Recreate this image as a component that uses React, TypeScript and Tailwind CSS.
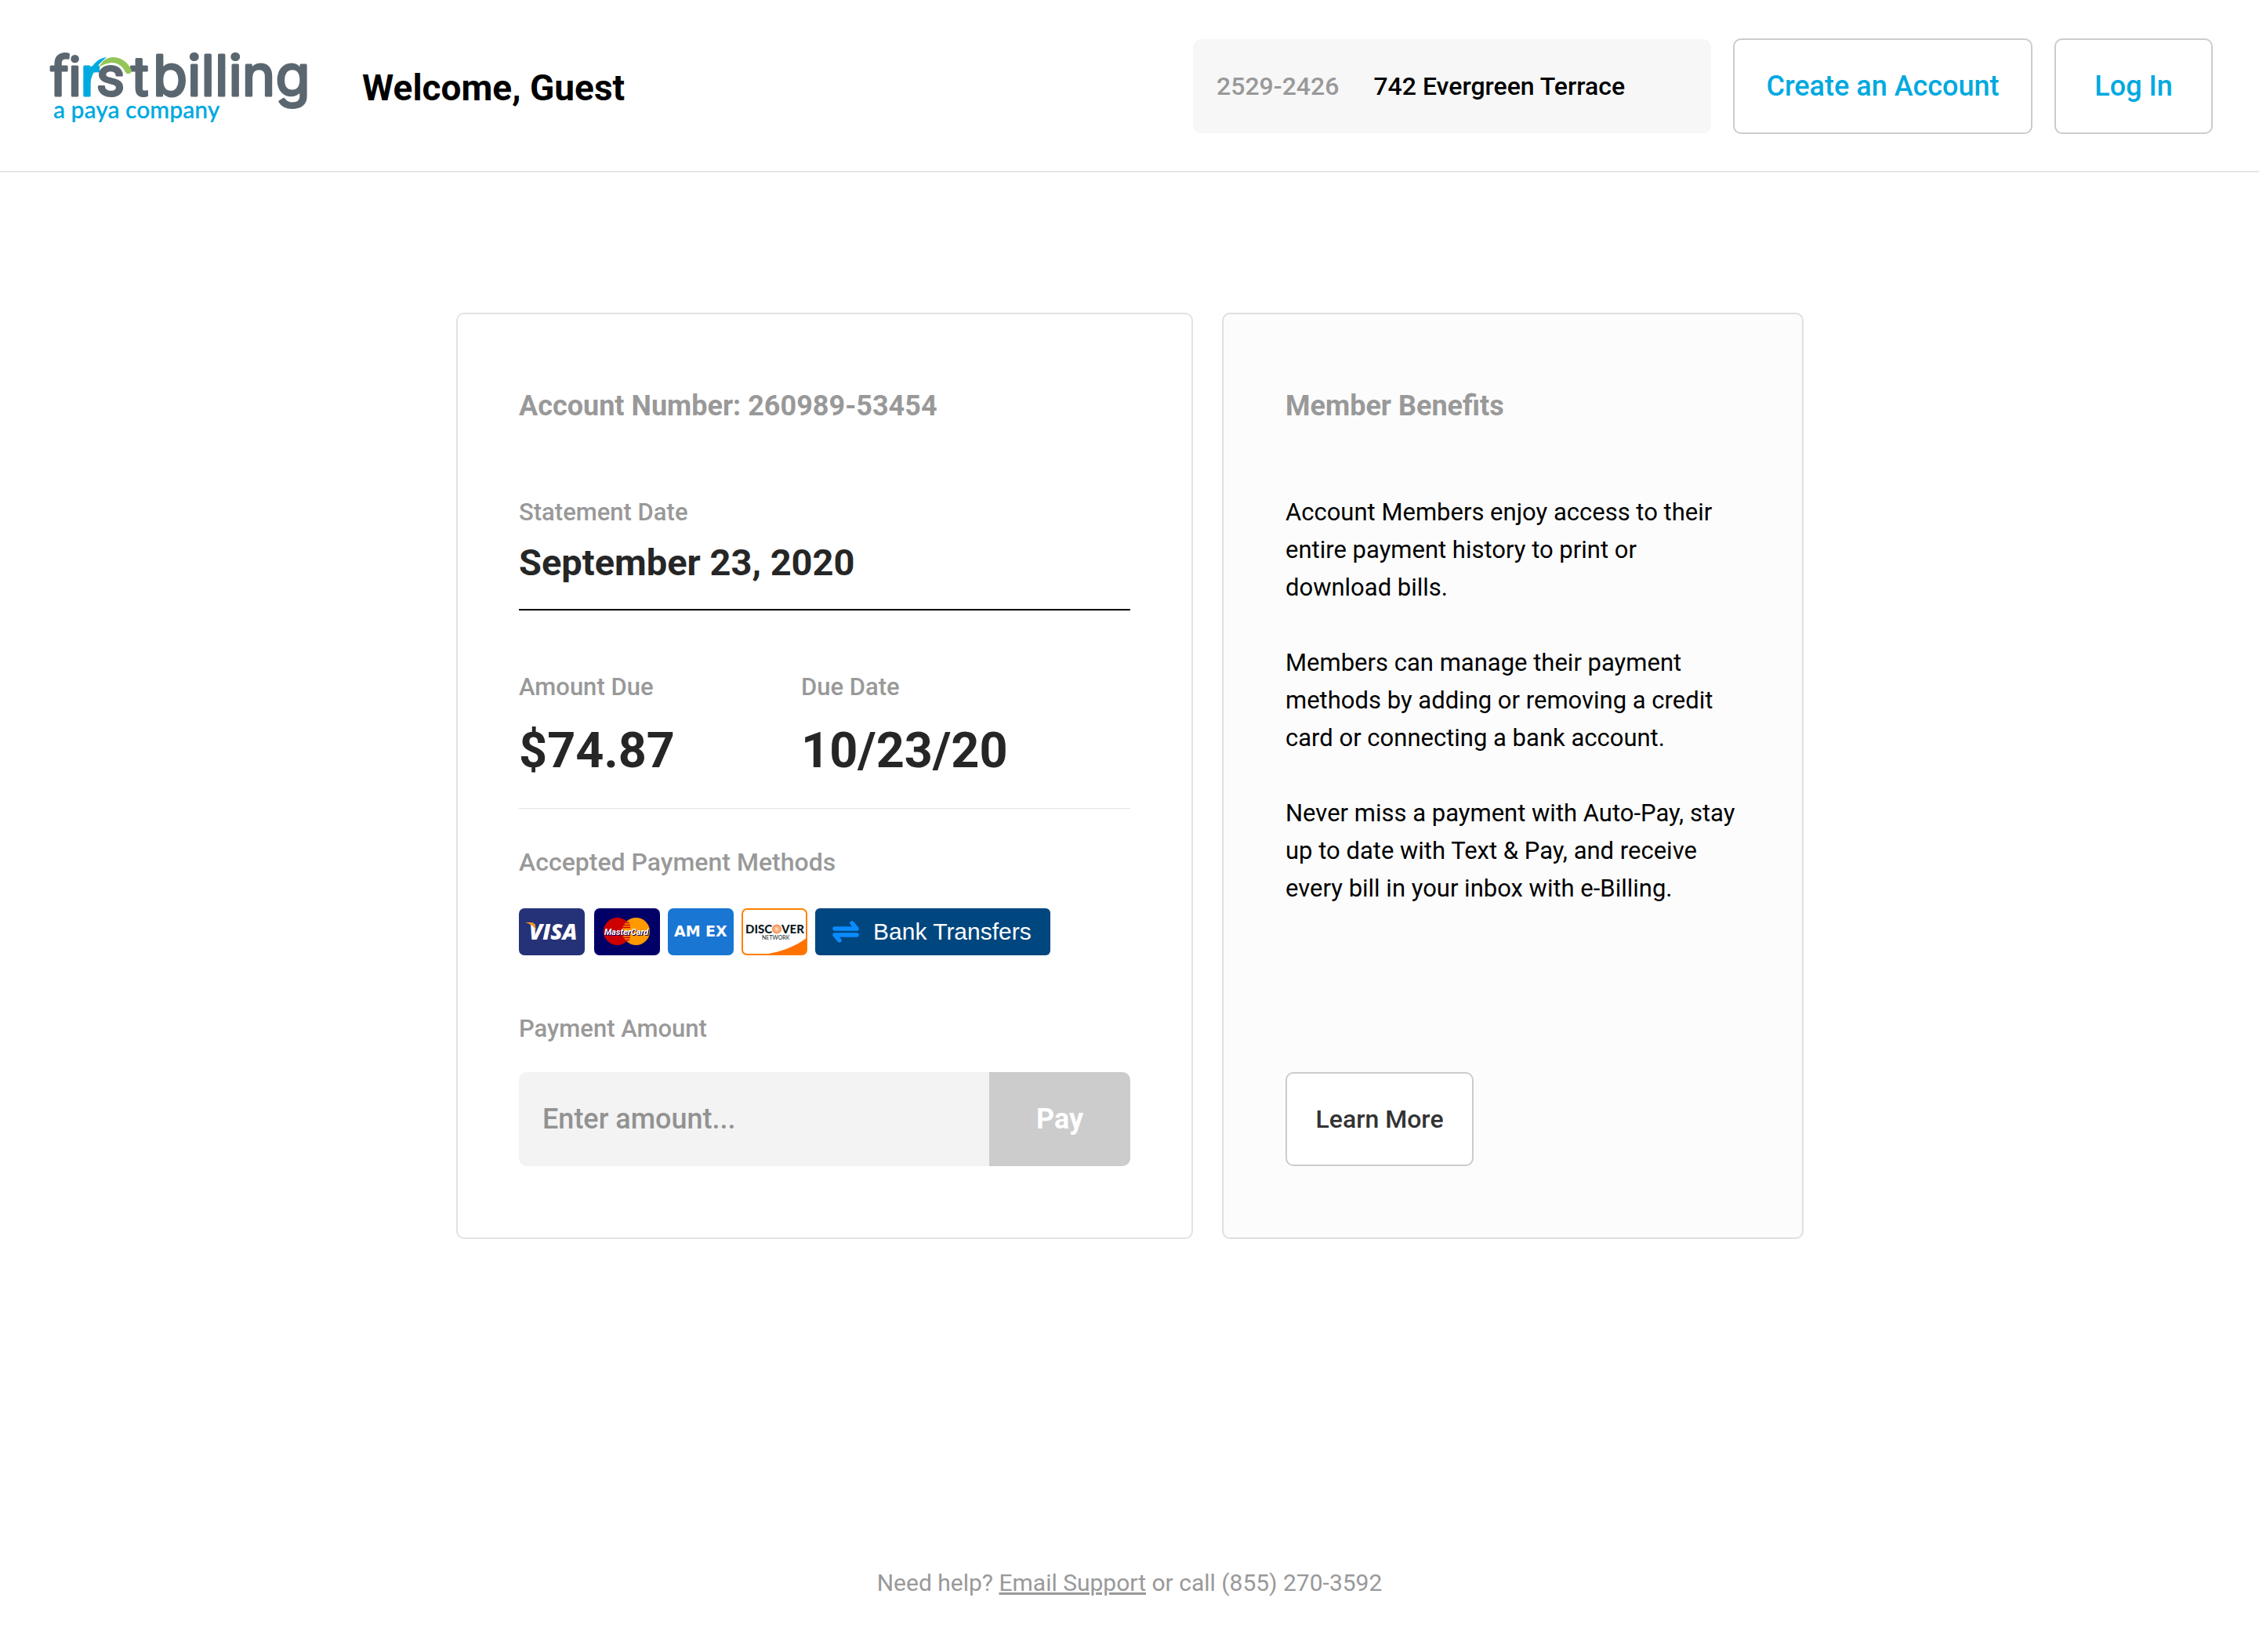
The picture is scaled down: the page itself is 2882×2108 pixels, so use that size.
import React from "react";

const benefits = [
  "Account Members enjoy access to their entire payment history to print or download bills.",
  "Members can manage their payment methods by adding or removing a credit card or connecting a bank account.",
  "Never miss a payment with Auto-Pay, stay up to date with Text & Pay, and receive every bill in your inbox with e-Billing.",
];

function Logo() {
  return (
    <svg viewBox="0 0 340 112" className="h-[112px] w-[340px] shrink-0" role="img" aria-label="firstbilling, a paya company">
      <g fill="#5b6770" stroke="#5b6770" strokeWidth="3" strokeLinejoin="round">
        <text y="68" fontFamily="Roboto, sans-serif" fontSize="70" className="[font-variant-ligatures:none]">
          <tspan x="3">f</tspan>
          <tspan x="27">i</tspan>
          <tspan x="43" fill="#00a9e0" stroke="#00a9e0">r</tspan>
          <tspan x="63">s</tspan>
          <tspan x="107">t</tspan>
        </text>
        <text x="135" y="68" fontFamily="Inter, sans-serif" fontSize="72">
          billing
        </text>
      </g>
      <path d="M54 37C59 28 65 20 76 19C66 27 57 38 55 53Z" fill="#00a9e0" />
      <path
        d="M66 32C70 24 76 19 84 19C95 19 104 26 108 36C108 40 102 42 100 38C96 29 89 26 82 26C75 27 70 29 66 32Z"
        fill="#93c656"
      />
      <text x="8" y="97" fontFamily="Lato, sans-serif" fontSize="30" fontWeight="600" fill="#00a9e0">
        a paya company
      </text>
    </svg>
  );
}

function Visa() {
  return (
    <svg viewBox="0 0 84 60" className="mr-[2px] h-[60px] w-[84px]" role="img" aria-label="Visa">
      <rect width="84" height="60" rx="7" fill="#263278" />
      <text x="13" y="40" fontFamily="Open Sans, sans-serif" fontSize="28" fontWeight="800" fontStyle="italic" fill="#fff">
        VISA
      </text>
      <path d="M8 18H17Q21 19 22 28Q17 20 8 18Z" fill="#f7941e" />
    </svg>
  );
}

function MasterCard() {
  return (
    <svg viewBox="0 0 84 60" className="h-[60px] w-[84px]" role="img" aria-label="MasterCard">
      <rect width="84" height="60" rx="7" fill="#000066" />
      <circle cx="29.5" cy="29.5" r="17.5" fill="#cc0000" />
      <circle cx="53.5" cy="29.5" r="17.5" fill="#ff9900" />
      <path d="M40 18.5H45M38 21.5H46M37 24.5H46M37 34.5H46M38 37.5H46M40 40.5H45" stroke="#cc0000" strokeWidth="1.5" />
      <text
        x="13"
        y="34"
        fontFamily="Roboto, sans-serif"
        fontSize="11"
        fontWeight="700"
        fontStyle="italic"
        fill="#fff"
        className="drop-shadow-[1px_1px_0_#000066]"
      >
        MasterCard
      </text>
    </svg>
  );
}

function Amex() {
  return (
    <svg viewBox="0 0 84 60" className="h-[60px] w-[84px]" role="img" aria-label="American Express">
      <rect width="84" height="60" rx="7" fill="#1976d2" />
      <g fontFamily="DejaVu Sans, sans-serif" fontSize="19" fontWeight="700" fill="#fff">
        <text x="8" y="36">AM</text>
        <text x="48" y="36">EX</text>
      </g>
    </svg>
  );
}

function Discover() {
  return (
    <svg viewBox="0 0 84 60" className="h-[60px] w-[84px]" role="img" aria-label="Discover Network">
      <defs>
        <radialGradient id="discover-orb">
          <stop offset="0" stopColor="#fde0c4" />
          <stop offset="1" stopColor="#f58a4b" />
        </radialGradient>
      </defs>
      <rect x="1" y="1" width="82" height="58" rx="6" fill="#fff" stroke="#ff8000" strokeWidth="2" />
      <path d="M28 59C50 56 68 49 83 38V53Q83 59 77 59Z" fill="#ff7200" />
      <g fontFamily="Lato, sans-serif" fill="#0f1a22">
        <g fontSize="15" fontWeight="900">
          <text x="5" y="32">DISC</text>
          <text x="51" y="32">VER</text>
        </g>
        <text x="26" y="40" fontSize="7">NETWORK</text>
      </g>
      <circle cx="45" cy="26.5" r="6" fill="url(#discover-orb)" />
    </svg>
  );
}

function BankTransfers() {
  return (
    <div className="flex h-[60px] w-[300px] items-center rounded-[6px] bg-[#00467f] pl-[22px] font-['Liberation_Sans',sans-serif] text-[30px] leading-none whitespace-nowrap text-white">
      <svg viewBox="0 0 34 28" className="mr-[18px] h-[28px] w-[34px] shrink-0" aria-hidden="true">
        <path
          d="M3 10H31L25 3M31 18H3L9 25"
          fill="none"
          stroke="#0a8cff"
          strokeWidth="5.5"
          strokeLinecap="round"
          strokeLinejoin="round"
        />
      </svg>
      Bank Transfers
    </div>
  );
}

export default function App() {
  return (
    <div className="flex min-h-screen flex-col bg-white font-['Roboto',sans-serif] text-[31px] leading-[48px] text-black">
      <header className="flex items-center gap-7 border-b-2 border-[#e6e6e6] pt-[49px] pr-[59px] pb-[47px] pl-[60px]">
        <Logo />
        <h1 className="mr-auto ml-[34px] pt-1 text-[46px] leading-[56px] font-bold">Welcome, Guest</h1>
        <div className="flex h-[120px] w-[661px] items-center gap-11 rounded-[10px] bg-[#f7f7f7] px-[30px] text-[32px] font-medium">
          <span className="text-[#999]">2529-2426</span>
          <span>742 Evergreen Terrace</span>
        </div>
        <button className="h-[122px] w-[382px] rounded-[10px] border-2 border-[#ccc] bg-white text-[36px] font-medium text-[#00a9e0]">
          Create an Account
        </button>
        <button className="h-[122px] w-[202px] rounded-[10px] border-2 border-[#ccc] bg-white text-[36px] font-medium text-[#00a9e0]">
          Log In
        </button>
      </header>

      <main className="mx-auto mt-[179px] grid w-full max-w-[1720px] grid-cols-[940fr_742fr] gap-[37px] pl-px">
        <section className="rounded-[10px] border-2 border-[#e2e2e2] px-[78px] pt-[93px] pb-[91px]">
          <h2 className="text-[36px] font-bold text-[#999]">Account Number: 260989-53454</h2>

          <dl className="mt-[88px] border-b-2 border-black pb-[31px]">
            <dt className="font-medium text-[#999]">Statement Date</dt>
            <dd className="mt-[12px] text-[47px] leading-[56px] font-bold text-[#262626]">September 23, 2020</dd>
          </dl>

          <dl className="mt-[74px] flex border-b border-[#e2e2e2] pb-[35px]">
            <div className="w-[360px]">
              <dt className="font-medium text-[#999]">Amount Due</dt>
              <dd className="mt-[19px] text-[63px] leading-[76px] font-bold text-[#262626]">$74.87</dd>
            </div>
            <div>
              <dt className="font-medium text-[#999]">Due Date</dt>
              <dd className="mt-[19px] text-[63px] leading-[76px] font-bold text-[#262626]">10/23/20</dd>
            </div>
          </dl>

          <h3 className="mt-[44px] text-[32px] font-medium text-[#999]">Accepted Payment Methods</h3>
          <div className="mt-[35px] flex gap-[10px]">
            <Visa />
            <MasterCard />
            <Amex />
            <Discover />
            <BankTransfers />
          </div>

          <form onSubmit={(e) => e.preventDefault()}>
            <label htmlFor="amount" className="mt-[70px] block font-medium text-[#999]">
              Payment Amount
            </label>
            <div className="mt-[31px] flex h-[120px] overflow-hidden rounded-[10px]">
              <input
                id="amount"
                type="text"
                placeholder="Enter amount..."
                className="min-w-0 flex-1 bg-[#f3f3f3] px-[30px] text-[36px] font-medium outline-none placeholder:text-[#929292]"
              />
              <button className="w-[180px] bg-[#ccc] text-[36px] font-bold text-white">Pay</button>
            </div>
          </form>
        </section>

        <section className="flex flex-col rounded-[10px] border-2 border-[#dfdfdf] bg-[#fcfcfc] pt-[93px] pr-[76px] pb-[91px] pl-[79px]">
          <h2 className="text-[36px] font-bold text-[#999]">Member Benefits</h2>
          <div className="mt-[88px] flex flex-col gap-[48px]">
            {benefits.map((text) => (
              <p key={text}>{text}</p>
            ))}
          </div>
          <button className="mt-auto h-[120px] w-[240px] rounded-[10px] border-2 border-[#ccc] bg-white text-[32px] font-medium text-[#333]">
            Learn More
          </button>
        </section>
      </main>

      <footer className="mt-auto pb-[64px] text-center text-[30px] text-[#999]">
        Need help?{" "}
        <a href="#support" className="underline">
          Email Support
        </a>{" "}
        or call (855) 270-3592
      </footer>
    </div>
  );
}
